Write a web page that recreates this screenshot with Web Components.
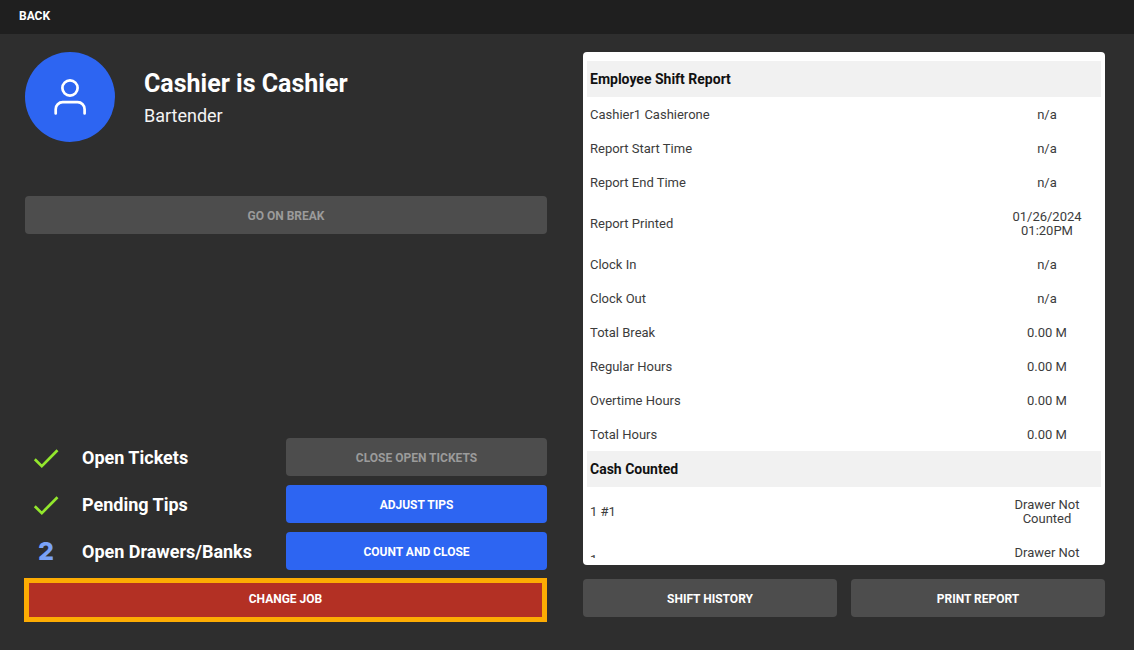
<!DOCTYPE html>
<html lang="en">
<head>
<meta charset="utf-8">
<title>Employee Shift</title>
<style>
  html, body { margin: 0; height: 100%; }
  body { background: #2e2e2e; color: #fff; font-family: Roboto, sans-serif; }
</style>
</head>
<body>
<shift-page>
  <top-bar slot="bar">BACK</top-bar>
  <employee-card slot="left" name="Cashier is Cashier" job="Bartender"></employee-card>
  <action-button slot="left" disabled>GO ON BREAK</action-button>
  <task-row slot="tasks" label="Open Tickets"><action-button disabled>CLOSE OPEN TICKETS</action-button></task-row>
  <task-row slot="tasks" label="Pending Tips"><action-button tone="primary">ADJUST TIPS</action-button></task-row>
  <task-row slot="tasks" label="Open Drawers/Banks" count="2"><action-button tone="primary">COUNT AND CLOSE</action-button></task-row>
  <action-button slot="job" tone="danger">CHANGE JOB</action-button>
  <shift-report slot="report"></shift-report>
  <action-button slot="tools">SHIFT HISTORY</action-button>
  <action-button slot="tools">PRINT REPORT</action-button>
</shift-page>
<script>
const attach = (el, html) => { el.attachShadow({ mode: "open" }).innerHTML = html; };

customElements.define("shift-page", class extends HTMLElement {
  constructor() {
    super();
    attach(this, `
      <style>
        :host { display: flex; flex-direction: column; height: 100vh; min-height: 600px; }
        main { flex: 1; min-height: 0; display: grid; grid-template-columns: 1fr 1fr; gap: 36px; padding: 18px 29px 0 25px; }
        section { display: flex; flex-direction: column; min-width: 0; min-height: 0; box-sizing: border-box; }
        .left { padding-bottom: 28px; }
        .right { padding-bottom: 33px; gap: 14px; }
        .top { display: flex; flex-direction: column; gap: 54px; }
        .tasks { display: flex; flex-direction: column; gap: 9px; margin: auto 0 8px; }
        .tools { display: grid; grid-template-columns: 1fr 1fr; gap: 14px; }
      </style>
      <slot name="bar"></slot>
      <main>
        <section class="left">
          <div class="top"><slot name="left"></slot></div>
          <div class="tasks"><slot name="tasks"></slot></div>
          <slot name="job"></slot>
        </section>
        <section class="right">
          <slot name="report"></slot>
          <div class="tools"><slot name="tools"></slot></div>
        </section>
      </main>`);
  }
});

customElements.define("top-bar", class extends HTMLElement {
  constructor() {
    super();
    attach(this, `
      <style>
        :host { display: flex; flex: none; height: 34px; background: #1f1f1f; }
        button { border: 0; background: none; color: inherit; cursor: pointer; padding: 0 19px 2px; font: 700 12px Roboto, sans-serif; }
      </style>
      <button type="button"><slot></slot></button>`);
  }
});

customElements.define("employee-card", class extends HTMLElement {
  constructor() {
    super();
    attach(this, `
      <style>
        :host { display: flex; align-items: center; gap: 29px; }
        .avatar { flex: none; width: 90px; height: 90px; border-radius: 50%; background: #2d65f2; }
        svg { display: block; }
        .who { padding-top: 2px; }
        h1 { margin: 0; font-size: 25px; line-height: 36px; font-weight: 700; }
        p { margin: 0; font-size: 18px; line-height: 28px; color: #f4f4f4; }
      </style>
      <div class="avatar">
        <svg width="90" height="90" viewBox="0 0 90 90" fill="none" stroke="#fff" stroke-width="2.7" stroke-linecap="round">
          <circle cx="45" cy="36" r="7.6"/>
          <path d="M30.7 61.5v-4.3a7 7 0 0 1 7-7h14.9a7 7 0 0 1 7 7v4.3"/>
        </svg>
      </div>
      <div class="who"><h1></h1><p></p></div>`);
    this.shadowRoot.querySelector("h1").textContent = this.getAttribute("name");
    this.shadowRoot.querySelector("p").textContent = this.getAttribute("job");
  }
});

customElements.define("action-button", class extends HTMLElement {
  constructor() {
    super();
    attach(this, `
      <style>
        :host { display: block; }
        button { display: block; box-sizing: border-box; width: 100%; height: 38px; padding: 2px 8px 0; border: 0; border-radius: 4px;
          background: #4d4d4d; color: #fff; font: 700 12px Roboto, sans-serif; cursor: pointer; }
        button:disabled { color: #9b9b9b; cursor: default; }
        :host([tone="primary"]) button { background: #2d65f2; }
        :host([tone="danger"]) { margin-left: -1px; }
        :host([tone="danger"]) button { height: 44px; padding: 0 8px 2px; background: #b33024; border: 5px solid #fdac03; border-radius: 0; }
      </style>
      <button type="button"><slot></slot></button>`);
    this.shadowRoot.querySelector("button").disabled = this.hasAttribute("disabled");
  }
});

customElements.define("task-row", class extends HTMLElement {
  constructor() {
    super();
    const count = this.getAttribute("count");
    attach(this, `
      <style>
        :host { display: grid; grid-template-columns: 57px 1fr 50%; align-items: center; height: 38px; }
        .mark { width: 42px; text-align: center; color: #7aa2f7; font: 800 25px/38px Inter, sans-serif; }
        svg { display: block; }
        .label { padding-top: 2px; font-size: 18px; line-height: 36px; font-weight: 700; white-space: nowrap; }
      </style>
      <div class="mark">${count || `<svg width="42" height="38" viewBox="0 0 42 38" fill="none" stroke="#93e72d" stroke-width="2.7"><path d="M9.8 21.3l7 6.8L32.5 12.2"/></svg>`}</div>
      <div class="label"></div>
      <slot></slot>`);
    this.shadowRoot.querySelector(".label").textContent = this.getAttribute("label");
  }
});

customElements.define("shift-report", class extends HTMLElement {
  constructor() {
    super();
    const rows = list => list.map(([k, v]) => `<tr><th scope="row">${k}</th><td>${v}</td></tr>`).join("");
    attach(this, `
      <style>
        :host { display: block; flex: 1; min-height: 0; box-sizing: border-box; padding: 9px 4px 7px; border-radius: 4px; background: #fff; }
        .scroll { height: 100%; overflow-y: auto; scrollbar-width: none; }
        table { width: 100%; border-collapse: collapse; color: #3c3c3c; font-size: 13px; line-height: 14px; }
        th { padding: 11px 3px 9px; text-align: left; font-weight: 400; }
        td { width: 102px; padding: 11px 3px 9px; text-align: center; }
        thead th { padding: 11px 3px; background: #f1f1f1; color: #111; font-size: 14px; font-weight: 700; }
      </style>
      <div class="scroll">
        <table>
          <thead><tr><th colspan="2">Employee Shift Report</th></tr></thead>
          <tbody>${rows([["Cashier1 Cashierone", "n/a"], ["Report Start Time", "n/a"], ["Report End Time", "n/a"],
            ["Report Printed", "01/26/2024<br>01:20PM"], ["Clock In", "n/a"], ["Clock Out", "n/a"],
            ["Total Break", "0.00 M"], ["Regular Hours", "0.00 M"], ["Overtime Hours", "0.00 M"], ["Total Hours", "0.00 M"]])}</tbody>
        </table>
        <table>
          <thead><tr><th colspan="2">Cash Counted</th></tr></thead>
          <tbody>${rows([["1 #1", "Drawer Not<br>Counted"], ["1", "Drawer Not<br>Counted"]])}</tbody>
        </table>
      </div>`);
  }
});
</script>
</body>
</html>
